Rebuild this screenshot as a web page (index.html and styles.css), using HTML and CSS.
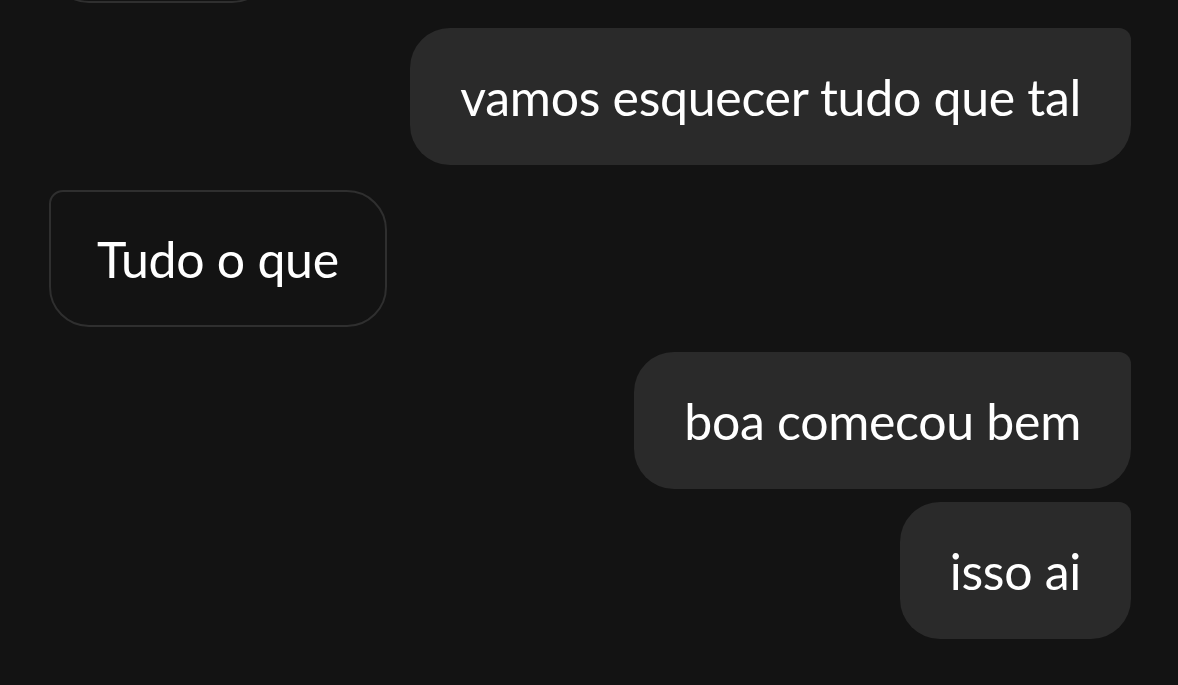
FILE: index.html
```html
<!DOCTYPE html>
<html lang="pt-BR">
<head>
  <meta charset="UTF-8" />
  <meta name="viewport" content="width=device-width, initial-scale=1.0"/>
  <title>Conversa</title>
  <link rel="stylesheet" href="styles.css">
</head>
<body>
  <div class="chat">
    <!-- previous message, scrolled out of view -->
    <div class="msg in first"></div>
    <div class="msg out">vamos esquecer tudo que tal</div>
    <div class="msg in">Tudo o que</div>
    <div class="msg out">boa comecou bem</div>
    <div class="msg out cont">isso ai</div>
  </div>
</body>
</html>
```

FILE: styles.css
```css
body {
  margin: 0;
  background: #131313;
  color: #fff;
  font-family: Lato, "Open Sans", sans-serif;
  height: 100vh;
  overflow: hidden;
}

.chat {
  display: flex;
  flex-direction: column;
  padding: 0 47px 0 49px;
}

.msg {
  font-size: 50px;
  line-height: 60px;
  letter-spacing: -0.3px;
  margin-top: 25px;
  white-space: nowrap;
}

.msg.first {
  margin-top: -134px;
  width: 223px;
  height: 137px;
  box-sizing: border-box;
}

.msg.cont {
  margin-top: 13px;
}

.msg.out {
  align-self: flex-end;
  background: #2a2a2a;
  padding: 38.5px 50px;
  border-radius: 40px 12px 40px 40px;
}

.msg.in {
  align-self: flex-start;
  border: 2px solid #2f2f2f;
  padding: 36.5px 46px;
  border-radius: 14px 40px 40px 40px;
}
```
